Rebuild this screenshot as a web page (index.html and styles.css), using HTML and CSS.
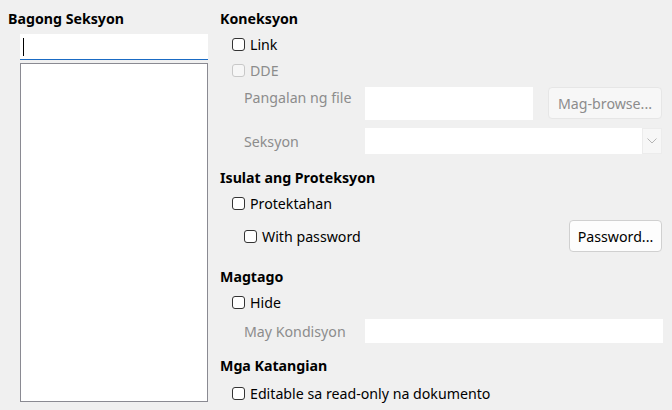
FILE: index.html
```html
<!DOCTYPE html>
<html>
<head>
<meta charset="utf-8">
<link rel="stylesheet" href="styles.css">
</head>
<body>
<div class="page">
  <div class="left">
    <div class="heading">Bagong Seksyon</div>
    <div class="name-input"><span class="caret"></span></div>
    <div class="listbox"></div>
  </div>
  <div class="right">
    <div class="heading h-konek">Koneksyon</div>
    <label class="check row-link"><span class="box"></span>Link</label>
    <label class="check row-dde disabled"><span class="box"></span>DDE</label>
    <div class="field row-file">
      <span class="flabel disabled top">Pangalan ng file</span>
      <div class="input file-input"></div>
      <div class="button disabled-btn">Mag-browse...</div>
    </div>
    <div class="field row-seksyon">
      <span class="flabel disabled">Seksyon</span>
      <div class="combo">
        <div class="combo-text"></div>
        <div class="combo-btn">
          <svg width="10" height="6" viewBox="0 0 10 6"><path d="M0.5 0.5 L5 5 L9.5 0.5" fill="none" stroke="#b5b5b5" stroke-width="1"/></svg>
        </div>
      </div>
    </div>
    <div class="heading h-isulat">Isulat ang Proteksyon</div>
    <label class="check row-prot"><span class="box"></span>Protektahan</label>
    <div class="row-pass">
      <label class="check sub"><span class="box"></span>With password</label>
      <div class="button pass-btn">Password...</div>
    </div>
    <div class="heading h-magtago">Magtago</div>
    <label class="check row-hide"><span class="box"></span>Hide</label>
    <div class="field row-kond">
      <span class="flabel disabled">May Kondisyon</span>
      <div class="input kond-input"></div>
    </div>
    <div class="heading h-katang">Mga Katangian</div>
    <label class="check row-edit"><span class="box"></span>Editable sa read-only na dokumento</label>
  </div>
</div>
</body>
</html>
```
FILE: styles.css
```css
* { box-sizing: border-box; }
html, body {
  margin: 0;
  padding: 0;
  background: #f0f0f0;
  width: 672px;
  height: 410px;
  overflow: hidden;
}
body {
  font-family: "Noto Sans", "Open Sans", sans-serif;
  font-size: 14.2px;
  color: #000;
}
.page {
  display: flex;
  height: 410px;
}
.left {
  width: 220px;
  display: flex;
  flex-direction: column;
}
.heading {
  font-weight: bold;
  line-height: 20px;
  height: 20px;
  white-space: nowrap;
}
.left .heading {
  margin-top: 9px;
  padding-left: 8px;
}
.name-input {
  margin: 5px 0 0 20px;
  width: 188px;
  height: 26px;
  background: #fff;
  border-bottom: 1px solid #1a6bc4;
  display: flex;
  align-items: center;
  padding-left: 3px;
}
.caret {
  width: 1px;
  height: 18px;
  background: #000;
}
.listbox {
  margin: 3px 0 0 20px;
  width: 188px;
  height: 339px;
  background: #fff;
  border: 1px solid #8a8a92;
}
.right {
  width: 452px;
  display: flex;
  flex-direction: column;
}
.right .heading { margin-left: 0; }
.h-konek { margin-top: 9px; }
.check {
  display: flex;
  align-items: center;
  height: 24px;
  margin-left: 12px;
  white-space: nowrap;
}
.box {
  width: 13px;
  height: 13px;
  border: 1px solid #333;
  border-radius: 3px;
  background: #fff;
  margin-right: 5px;
  flex: none;
}
.disabled { color: #8c8c8c; }
.check.disabled .box { border-color: #c8c8c8; background: #f6f6f6; }
.row-link { margin-top: 3px; }
.row-dde { margin-top: 2px; }
.field {
  display: flex;
  align-items: center;
  padding-left: 24px;
}
.flabel {
  width: 121px;
  flex: none;
  white-space: nowrap;
}
.flabel.top { align-self: flex-start; padding-top: 1px; line-height: 20px; }
.row-file { margin-top: 5px; height: 33px; }
.input { background: #fff; }
.file-input { width: 168px; height: 33px; }
.button {
  display: flex;
  align-items: center;
  justify-content: center;
  border-radius: 4px;
  white-space: nowrap;
}
.disabled-btn {
  margin-left: 15px;
  width: 114px;
  height: 32px;
  align-self: flex-start;
  background: #f7f7f7;
  border: 1px solid #e6e6e6;
  color: #8c8c8c;
}
.row-seksyon { margin-top: 8px; height: 26px; }
.combo {
  display: flex;
  width: 297px;
  height: 26px;
}
.combo-text { flex: 1; background: #fff; }
.combo-btn {
  width: 20px;
  background: #f7f7f7;
  border: 1px solid #ececec;
  display: flex;
  align-items: center;
  justify-content: center;
}
.h-isulat { margin-top: 14px; }
.row-prot { margin-top: 3px; }
.row-pass {
  display: flex;
  align-items: center;
  justify-content: space-between;
  margin-top: 5px;
  height: 32px;
  padding-right: 10px;
}
.check.sub { margin-left: 24px; }
.pass-btn {
  width: 93px;
  height: 32px;
  background: #fdfdfd;
  border: 1px solid #d0d0d0;
}
.h-magtago { margin-top: 15px; }
.row-hide { margin-top: 3px; }
.row-kond { margin-top: 5px; height: 24px; }
.kond-input { width: 298px; height: 24px; }
.h-katang { margin-top: 13px; }
.row-edit { margin-top: 5px; }
```
